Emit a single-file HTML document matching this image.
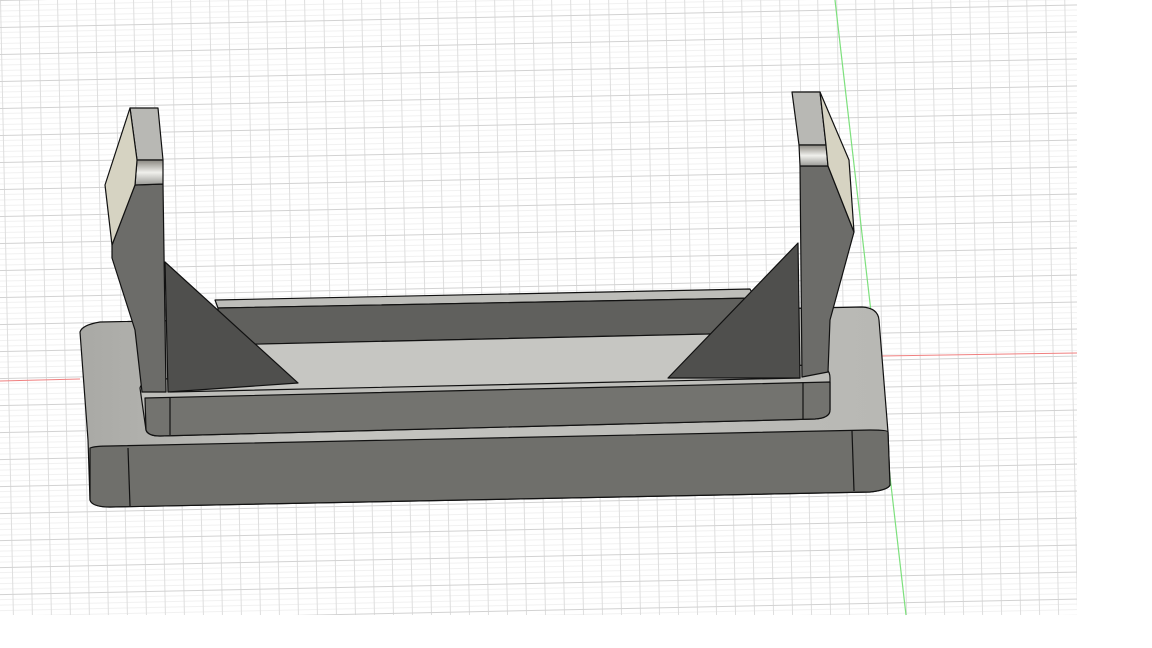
<!DOCTYPE html>
<html><head><style>html,body{margin:0;padding:0;background:#fff;width:1152px;height:648px;overflow:hidden}</style></head>
<body>
<svg width="1152" height="648" viewBox="0 0 1152 648" xmlns="http://www.w3.org/2000/svg">
<defs>
<pattern id="g" width="19" height="27" patternUnits="userSpaceOnUse" patternTransform="rotate(-1.2)">
<rect width="19" height="27" fill="#fff"/>
<g stroke="#f1f1f1" stroke-width="1">
<line x1="0" y1="5.5" x2="19" y2="5.5"/><line x1="0" y1="11" x2="19" y2="11"/><line x1="0" y1="16.5" x2="19" y2="16.5"/><line x1="0" y1="22" x2="19" y2="22"/>
</g>
<line x1="0.5" y1="0" x2="0.5" y2="27" stroke="#dedede"/>
<line x1="0" y1="0.5" x2="19" y2="0.5" stroke="#d2d2d2"/>
</pattern>
<linearGradient id="top" x1="0" y1="0" x2="1" y2="0"><stop offset="0" stop-color="#a9a9a5"/><stop offset="0.3" stop-color="#c4c4c0"/><stop offset="1" stop-color="#b8b8b4"/></linearGradient>
<linearGradient id="hl" x1="0" y1="0" x2="0" y2="1"><stop offset="0" stop-color="#8a8780"/><stop offset="0.5" stop-color="#f0f0ec"/><stop offset="1" stop-color="#9a9a96"/></linearGradient>
</defs>
<rect x="0" y="0" width="1077" height="615" fill="url(#g)"/>
<line x1="0" y1="381" x2="80" y2="379" stroke="#f08080"/>
<line x1="880" y1="356" x2="1077" y2="353" stroke="#f08080"/>
<line x1="835" y1="0" x2="906" y2="615" stroke="#7de07d" stroke-width="1.2"/>
<g stroke="#111" stroke-width="1.2" stroke-linejoin="round">
<path d="M80,332 Q82,325 100,322 L862,307 Q878,308 879,320 L888,432 L890,485 Q888,490 870,492 L110,507 Q92,507 90,500 L88,440 Z" fill="url(#top)"/>
<path d="M90,448 Q95,446 110,446 L870,430 Q888,430 888,432 L890,485 Q888,490 870,492 L110,507 Q92,507 90,500 Z" fill="#6f6f6b"/>
<line x1="128" y1="448" x2="130" y2="506"/><line x1="852" y1="431" x2="854" y2="491"/>
<path d="M140,388 Q142,380 160,379 L815,365 Q830,366 830,378 L830,410 Q830,418 815,419 L160,436 Q148,436 146,430 Z" fill="#bebeba"/>
<path d="M145,398 L830,382 L830,410 Q830,418 815,419 L160,436 Q148,436 146,430 Z" fill="#73736f"/>
<line x1="170" y1="397" x2="170" y2="435"/><line x1="803" y1="382" x2="803" y2="419"/>
<path d="M215,300 L750,289 L755,298 L218,308 Z" fill="#bdbdb9"/>
<path d="M218,308 L755,298 L755,333 L218,345 Z" fill="#60605d"/>
<path d="M218,345 L755,333 L800,378 L170,392 Z" fill="#c6c6c2"/>
<path d="M135,185 L163,184 L166,392 L142,392 L135,330 L112,258 L112,245 Z" fill="#6c6c69"/>
<path d="M130,108 L158,108 L163,160 L137,160 Z" fill="#b8b8b4"/>
<path d="M137,160 L163,160 L163,184 L135,185 Z" fill="url(#hl)"/>
<path d="M130,108 L137,160 L135,185 L112,245 L105,185 Z" fill="#d6d3c2"/>
<path d="M165,262 L298,383 L168,392 Z" fill="#4f4f4d"/>
<path d="M800,166 L828,166 L854,232 L830,320 L828,372 L802,377 Z" fill="#6c6c69"/>
<path d="M792,92 L820,92 L826,145 L799,145 Z" fill="#b8b8b4"/>
<path d="M799,145 L826,145 L828,166 L800,166 Z" fill="url(#hl)"/>
<path d="M820,92 L849,160 L854,232 L828,166 L826,145 Z" fill="#d6d3c2"/>
<path d="M798,243 L800,378 L668,378 Z" fill="#4f4f4d"/>
</g>
</svg>
</body></html>
